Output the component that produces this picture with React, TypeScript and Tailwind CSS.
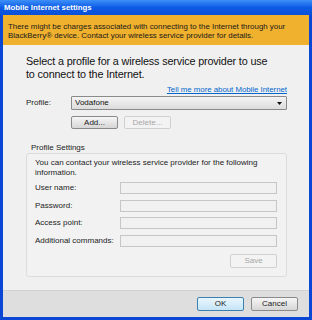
import React from "react";

function Btn({ children, disabled, ok, h = "h-[14px]" }: { children: React.ReactNode; disabled?: boolean; ok?: boolean; h?: string }) {
  return (
    <div
      className={`w-[47px] ${h} flex items-center justify-center rounded-[2px] border text-[8px] ${
        disabled
          ? "border-[#d0d0d0] bg-[#f3f3f3] text-[#a6a6a6]"
          : ok
          ? "border-[#3c7fb1] bg-gradient-to-b from-[#eaf6fd] to-[#c4e4f6] text-[#222]"
          : "border-[#8a8a8a] bg-gradient-to-b from-[#f6f6f6] to-[#d6d6d6] text-[#222]"
      }`}
    >
      {children}
    </div>
  );
}

function Field({ label }: { label: string }) {
  return (
    <div className="flex items-center h-[12px]">
      <div className="w-[85px] text-[8px] text-[#222]">{label}</div>
      <div className="w-[157px] h-[12px] border border-[#c6c6c6] bg-[#f1f1f1]" />
    </div>
  );
}

export default function App() {
  return (
    <div className="w-[312px] h-[320px] flex flex-col bg-[#0a47d4]" style={{ fontFamily: "'Liberation Sans', Arial, sans-serif" }}>
      <div className="h-[15px] flex items-center pl-[4px] bg-gradient-to-b from-[#3d8ff8] via-[#0c5be6] to-[#0a50d8]">
        <span className="text-white font-bold text-[7.8px] leading-[15px]">Mobile Internet settings</span>
      </div>
      <div className="flex-1 mx-[3px] mb-[3px] flex flex-col bg-[#f0f0f0]">
        <div className="h-[30px] bg-[#f0b12e] pl-[5px] pt-[7px] text-[7.9px] leading-[9px] text-[#1a1a1a]">
          There might be charges associated with connecting to the Internet through your BlackBerry® device. Contact your wireless service provider for details.
        </div>
        <div className="flex-1 flex flex-col pl-[23px] pr-[22px]">
          <div className="mt-[10px] h-[26px] text-[10.8px] leading-[13px] tracking-[-0.15px] text-[#111] whitespace-nowrap">
            Select a profile for a wireless service provider to use
            <br />
            to connect to the Internet.
          </div>
          <div className="mt-[4px] h-[10px] text-right text-[7.8px] leading-[10px] text-[#0066cc] underline">Tell me more about Mobile Internet</div>
          <div className="mt-[1px] flex items-center h-[14px]">
            <div className="w-[45px] text-[8px] text-[#222]">Profile:</div>
            <div className="flex-1 h-[14px] border border-[#8a8a8a] rounded-[1px] bg-gradient-to-b from-[#f4f4f4] to-[#dcdcdc] flex items-center justify-between pl-[3px] pr-[4px] text-[8px] text-[#111]">
              <span>Vodafone</span>
              <svg width="5" height="3" viewBox="0 0 5 3"><path d="M0 0h5L2.5 3z" fill="#111" /></svg>
            </div>
          </div>
          <div className="mt-[6px] ml-[45px] flex gap-[6px]">
            <Btn h="h-[13px]">Add...</Btn>
            <Btn h="h-[13px]" disabled>Delete...</Btn>
          </div>
          <div className="mt-[14px] h-[10px] pl-[5px] text-[8px] leading-[10px] text-[#222]">Profile Settings</div>
          <div className="h-[124px] border border-[#dcdcdc] rounded-[3px] bg-[#f2f2f2] pt-[4px] pl-[8px] pr-[9px] flex flex-col">
            <div className="text-[8px] leading-[9.5px] text-[#222]">You can contact your wireless service provider for the following information.</div>
            <div className="mt-[5px] flex flex-col gap-[5.7px]">
              <Field label="User name:" />
              <Field label="Password:" />
              <Field label="Access point:" />
              <Field label="Additional commands:" />
            </div>
            <div className="mt-[7px] flex justify-end">
              <Btn disabled>Save</Btn>
            </div>
          </div>
        </div>
        <div className="h-[27px] bg-[#dedede] border-t border-[#d2d2d2] flex items-center justify-end pr-[11px] gap-[7px]">
          <Btn ok>OK</Btn>
          <Btn>Cancel</Btn>
        </div>
      </div>
    </div>
  );
}
